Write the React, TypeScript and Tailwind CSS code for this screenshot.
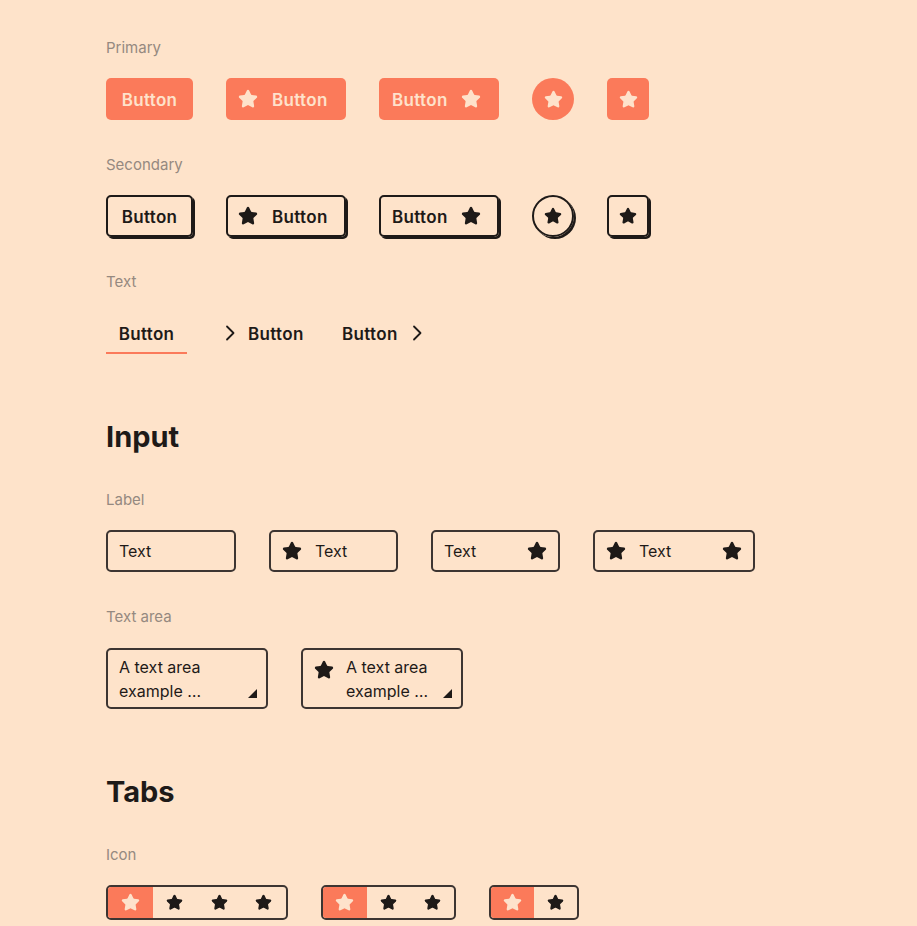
import React from "react";
import { Star } from "lucide-react";

const StarIcon = ({ size, className }: { size: number; className?: string }) => (
  <Star size={size} fill="currentColor" strokeWidth={2} className={className} />
);

const Chevron = () => (
  <svg width="12" height="16" viewBox="0 0 12 16" fill="none" className="shrink-0">
    <path d="M3 1.5 L9.5 8 L3 14.5" stroke="#1e1a18" strokeWidth="1.8" strokeLinecap="round" strokeLinejoin="round" />
  </svg>
);

const Label = ({ children, className = "" }: { children: React.ReactNode; className?: string }) => (
  <div className={"text-[15px] leading-5 text-[#958980] " + className}>{children}</div>
);

const Heading = ({ children, className = "" }: { children: React.ReactNode; className?: string }) => (
  <h2 className={"text-[29px] leading-[34px] font-bold text-[#1e1a18] " + className}>{children}</h2>
);

const btnText = "text-[17px] font-semibold tracking-[0.02em] pt-[3px]";

export default function App() {
  return (
    <div className="min-h-[926px] w-full bg-[#fee3ca] pl-[106px] pt-[38px] font-['Inter',sans-serif] text-[#1e1a18]">
      {/* Primary */}
      <Label>Primary</Label>
      <div className="mt-5 flex items-center gap-[33px]">
        <button className={"flex h-[42px] w-[87px] items-center justify-center rounded-[5px] bg-[#fb7a5a] text-[#fee2cb] " + btnText}>
          Button
        </button>
        <button className={"flex h-[42px] w-[120px] items-center rounded-[5px] bg-[#fb7a5a] pl-[12px] text-[#fee2cb] " + btnText}>
          <StarIcon size={20} className="-mt-[3px]" />
          <span className="ml-[14px]">Button</span>
        </button>
        <button className={"flex h-[42px] w-[120px] items-center rounded-[5px] bg-[#fb7a5a] pl-[13px] text-[#fee2cb] " + btnText}>
          <span>Button</span>
          <StarIcon size={20} className="-mt-[3px] ml-[13px]" />
        </button>
        <button className="flex h-[42px] w-[42px] items-center justify-center rounded-full bg-[#fb7a5a] text-[#fee2cb]">
          <StarIcon size={19} />
        </button>
        <button className="flex h-[42px] w-[42px] items-center justify-center rounded-[5px] bg-[#fb7a5a] text-[#fee2cb]">
          <StarIcon size={19} />
        </button>
      </div>

      {/* Secondary */}
      <Label className="mt-[35px]">Secondary</Label>
      <div className="mt-5 flex items-center gap-[33px]">
        <button className={"flex h-[42px] w-[87px] items-center justify-center rounded-[5px] border-2 border-[#1e1a18] shadow-[2px_2px_0_#1e1a18] " + btnText}>
          Button
        </button>
        <button className={"flex h-[42px] w-[120px] items-center rounded-[5px] border-2 border-[#1e1a18] pl-[10px] shadow-[2px_2px_0_#1e1a18] " + btnText}>
          <StarIcon size={20} className="-mt-[3px]" />
          <span className="ml-[14px]">Button</span>
        </button>
        <button className={"flex h-[42px] w-[120px] items-center rounded-[5px] border-2 border-[#1e1a18] pl-[11px] shadow-[2px_2px_0_#1e1a18] " + btnText}>
          <span>Button</span>
          <StarIcon size={20} className="-mt-[3px] ml-[13px]" />
        </button>
        <button className="flex h-[42px] w-[42px] items-center justify-center rounded-full border-2 border-[#1e1a18] shadow-[2px_2px_0_#1e1a18]">
          <StarIcon size={18} />
        </button>
        <button className="flex h-[42px] w-[42px] items-center justify-center rounded-[5px] border-2 border-[#1e1a18] shadow-[2px_2px_0_#1e1a18]">
          <StarIcon size={18} />
        </button>
      </div>

      {/* Text */}
      <Label className="mt-[35px]">Text</Label>
      <div className="mt-5 flex items-center gap-[33px]">
        <button className="flex h-[42px] w-[81px] items-center justify-center border-b-2 border-[#fb7a5a] pt-[5px] text-[17px] font-semibold tracking-[0.02em]">
          Button
        </button>
        <button className={"flex h-[42px] w-[89px] items-center pl-[4px] " + btnText}>
          <span className="-mt-[3px]">
            <Chevron />
          </span>
          <span className="ml-[12px]">Button</span>
        </button>
        <button className={"flex h-[42px] items-center " + btnText}>
          <span>Button</span>
          <span className="-mt-[3px] ml-[13px]">
            <Chevron />
          </span>
        </button>
      </div>

      {/* Input */}
      <Heading className="mt-[66px]">Input</Heading>
      <Label className="mt-[36px]">Label</Label>
      <div className="mt-5 flex items-center gap-[33px]">
        <div className="flex h-[42px] w-[130px] items-center rounded-[5px] border-2 border-[#3d3532] pl-[11px] text-[16px]">
          Text
        </div>
        <div className="flex h-[42px] w-[129px] items-center rounded-[5px] border-2 border-[#3d3532] pl-[11px] text-[16px]">
          <StarIcon size={20} />
          <span className="ml-[13px]">Text</span>
        </div>
        <div className="flex h-[42px] w-[129px] items-center justify-between rounded-[5px] border-2 border-[#3d3532] pl-[11px] pr-[11px] text-[16px]">
          <span>Text</span>
          <StarIcon size={20} />
        </div>
        <div className="flex h-[42px] w-[162px] items-center rounded-[5px] border-2 border-[#3d3532] pl-[11px] pr-[11px] text-[16px]">
          <StarIcon size={20} />
          <span className="ml-[13px] flex-1">Text</span>
          <StarIcon size={20} />
        </div>
      </div>

      {/* Text area */}
      <Label className="mt-[35px]">Text area</Label>
      <div className="mt-[21px] flex items-start gap-[33px]">
        <div className="relative h-[61px] w-[162px] rounded-[5px] border-2 border-[#3d3532] pl-[11px] pt-[5px] text-[16px] leading-6">
          <div>A text area</div>
          <div>example …</div>
          <svg width="9" height="9" viewBox="0 0 9 9" className="absolute bottom-[9px] right-[9px]">
            <path d="M9 0 L9 9 L0 9 Z" fill="#1e1a18" />
          </svg>
        </div>
        <div className="relative flex h-[61px] w-[162px] items-start rounded-[5px] border-2 border-[#3d3532] pl-[11px] pt-[5px] text-[16px] leading-6">
          <StarIcon size={20} className="mt-[5px]" />
          <div className="ml-[12px]">
            <div>A text area</div>
            <div>example …</div>
          </div>
          <svg width="9" height="9" viewBox="0 0 9 9" className="absolute bottom-[9px] right-[9px]">
            <path d="M9 0 L9 9 L0 9 Z" fill="#1e1a18" />
          </svg>
        </div>
      </div>

      {/* Tabs */}
      <Heading className="mt-[66px]">Tabs</Heading>
      <Label className="mt-[36px]">Icon</Label>
      <div className="mt-5 flex items-center gap-[33px]">
        {[
          { n: 4, w: "w-[182px]" },
          { n: 3, w: "w-[135px]" },
          { n: 2, w: "w-[90px]" },
        ].map(({ n, w }) => (
          <div
            key={n}
            className={"flex h-[35px] overflow-hidden rounded-[5px] border-2 border-[#3d3532] " + w}
          >
            {Array.from({ length: n }).map((_, i) => (
              <div
                key={i}
                className={
                  i === 0
                    ? "flex h-full flex-1 items-center justify-center bg-[#fb7a5a] text-[#fee2cb]"
                    : "flex h-full flex-1 items-center justify-center text-[#1e1a18]"
                }
              >
                <StarIcon size={i === 0 ? 19 : 17} />
              </div>
            ))}
          </div>
        ))}
      </div>
    </div>
  );
}
